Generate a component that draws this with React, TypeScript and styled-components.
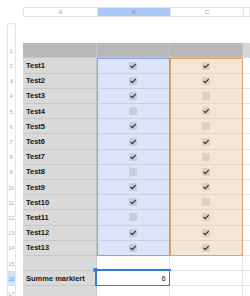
import React from 'react';
import styled, { createGlobalStyle } from 'styled-components';

// One sheet row: label in column A, checkbox states in B and C
interface Entry {
  name: string;
  b: boolean;
  c: boolean;
}

type Tone = 'head' | 'headEdge' | 'label' | 'blue' | 'orange' | 'blank';

const ROW_H = 15.2;

const entries: Entry[] = [
  { name: 'Test1', b: true, c: true },
  { name: 'Test2', b: true, c: true },
  { name: 'Test3', b: true, c: false },
  { name: 'Test4', b: false, c: true },
  { name: 'Test5', b: true, c: false },
  { name: 'Test6', b: true, c: true },
  { name: 'Test7', b: true, c: false },
  { name: 'Test8', b: false, c: true },
  { name: 'Test9', b: true, c: true },
  { name: 'Test10', b: true, c: false },
  { name: 'Test11', b: false, c: true },
  { name: 'Test12', b: true, c: true },
  { name: 'Test13', b: true, c: true },
];

const tones: Record<Tone, { bg: string; line: string }> = {
  head: { bg: '#b8b8b8', line: '#c6c6c6' },
  headEdge: { bg: '#d6d6d6', line: '#d6d6d6' },
  label: { bg: '#d9d9d9', line: '#c7c7c7' },
  blue: { bg: '#dbe4f8', line: '#c6d0ea' },
  orange: { bg: '#f5e5d7', line: '#e4d5c8' },
  blank: { bg: '#ffffff', line: '#e5e5e5' },
};

const GlobalStyle = createGlobalStyle`
  html, body {
    margin: 0;
    background: #ffffff;
    font-family: "Liberation Sans", Arial, sans-serif;
  }
  * {
    box-sizing: border-box;
  }
`;

const Page = styled.div`
  width: 250px;
  height: 296px;
  overflow: hidden;
  padding-top: 7px;
`;

const ColumnBar = styled.div`
  display: flex;
  height: 10.3px;
  margin-left: 22.7px;
  border: 1px solid #e2e2e2;
  border-right: none;
  border-radius: 3px 0 0 3px;
  overflow: hidden;
`;

const ColLetter = styled.div<{ $w?: number; $active?: boolean }>`
  flex: ${(p) => (p.$w ? `0 0 ${p.$w}px` : '1')};
  display: flex;
  align-items: center;
  justify-content: center;
  font-size: 6px;
  color: ${(p) => (p.$active ? '#7f95b8' : '#a3a3a3')};
  background: ${(p) => (p.$active ? '#abc9f6' : '#ffffff')};
  border-right: 1px solid #e6e6e6;
`;

const Main = styled.div`
  display: flex;
  margin-top: 5.7px;
  padding-left: 6.7px;
`;

const RowRuler = styled.div`
  flex: 0 0 9.3px;
  display: flex;
  flex-direction: column;
  padding-top: 19.3px;
  border: 1px solid #e6e6e6;
  border-bottom: none;
  border-radius: 3px 3px 0 0;
`;

const RowNum = styled.div<{ $active?: boolean }>`
  height: ${ROW_H}px;
  display: flex;
  align-items: center;
  justify-content: center;
  font-size: 5.5px;
  color: ${(p) => (p.$active ? '#5d8fd8' : '#a8a8a8')};
  background: ${(p) => (p.$active ? '#d2e2f9' : 'transparent')};
`;

const Sheet = styled.div`
  flex: 1;
  display: grid;
  grid-template-columns: 74px 73.3px 73.3px 1fr;
  grid-auto-rows: ${ROW_H}px;
  margin-top: 20.3px;
  margin-left: 6.7px;
`;

const Cell = styled.div<{ $tone: Tone; $row: number; $col: number; $align?: 'left' | 'center' | 'right' }>`
  grid-row: ${(p) => p.$row};
  grid-column: ${(p) => p.$col};
  position: relative;
  display: flex;
  align-items: center;
  justify-content: ${(p) =>
    p.$align === 'center' ? 'center' : p.$align === 'right' ? 'flex-end' : 'flex-start'};
  padding: 0 3.3px;
  background: ${(p) => tones[p.$tone].bg};
  border-bottom: 1px solid ${(p) => tones[p.$tone].line};
  border-right: 1px solid ${(p) => tones[p.$tone].line};
`;

const Label = styled.span`
  font-size: 7.5px;
  font-weight: 700;
  color: #151515;
  white-space: nowrap;
`;

const Value = styled.span`
  font-size: 7.5px;
  color: #222222;
`;

// Border round the data block of a column, drawn over its cells
const Band = styled.div<{ $col: number; $color: string }>`
  grid-column: ${(p) => p.$col};
  grid-row: 2 / 15;
  position: relative;
  z-index: 1;
  border: 1px solid ${(p) => p.$color};
  pointer-events: none;
`;

const Box = styled.span<{ $tone: 'blue' | 'orange' }>`
  width: 8px;
  height: 8px;
  display: inline-flex;
  border-radius: 1.5px;
  background: ${(p) => (p.$tone === 'blue' ? '#c6ccda' : '#ddd0c5')};
`;

const Selection = styled.div`
  position: absolute;
  inset: -2px;
  border: 2px solid #2f7be4;
  pointer-events: none;
`;

const Handle = styled.span<{ $corner: 'start' | 'end' }>`
  position: absolute;
  width: 4.4px;
  height: 4.4px;
  border-radius: 50%;
  background: #2f7be4;
  ${(p) => (p.$corner === 'start' ? 'top: -3.2px; left: -3.2px;' : 'bottom: -3.2px; right: -3.2px;')}
`;

const CheckBox: React.FC<{ checked: boolean; tone: 'blue' | 'orange' }> = ({ checked, tone }) => (
  <Box $tone={tone}>
    {checked && (
      <svg width="8" height="8" viewBox="0 0 8 8">
        <path
          d="M1.8 4.2 L3.3 5.7 L6.4 2.3"
          fill="none"
          stroke="#2a2a2a"
          strokeWidth="1.15"
          strokeLinecap="round"
          strokeLinejoin="round"
        />
      </svg>
    )}
  </Box>
);

const App: React.FC = () => {
  const both = entries.filter((e) => e.b && e.c).length;

  return (
    <>
      <GlobalStyle />
      <Page>
        <ColumnBar>
          <ColLetter $w={74}>A</ColLetter>
          <ColLetter $w={73.3} $active>
            B
          </ColLetter>
          <ColLetter $w={73.3}>C</ColLetter>
          <ColLetter />
        </ColumnBar>

        <Main>
          <RowRuler>
            {Array.from({ length: 17 }, (_, i) => (
              <RowNum key={i} $active={i + 1 === 16}>
                {i + 1}
              </RowNum>
            ))}
          </RowRuler>

          <Sheet>
            {/* Header row */}
            <Cell $row={1} $col={1} $tone="head" />
            <Cell $row={1} $col={2} $tone="head" />
            <Cell $row={1} $col={3} $tone="head" />
            <Cell $row={1} $col={4} $tone="headEdge" />

            {entries.map((e, i) => (
              <React.Fragment key={e.name}>
                <Cell $row={i + 2} $col={1} $tone="label">
                  <Label>{e.name}</Label>
                </Cell>
                <Cell $row={i + 2} $col={2} $tone="blue" $align="center">
                  <CheckBox checked={e.b} tone="blue" />
                </Cell>
                <Cell $row={i + 2} $col={3} $tone="orange" $align="center">
                  <CheckBox checked={e.c} tone="orange" />
                </Cell>
                <Cell $row={i + 2} $col={4} $tone="blank" />
              </React.Fragment>
            ))}

            <Cell $row={15} $col={1} $tone="label" />
            <Cell $row={15} $col={2} $tone="blank" />
            <Cell $row={15} $col={3} $tone="blank" />
            <Cell $row={15} $col={4} $tone="blank" />

            <Cell $row={16} $col={1} $tone="label">
              <Label>Summe markiert</Label>
            </Cell>
            <Cell $row={16} $col={2} $tone="blank" $align="right">
              <Value>{both}</Value>
              <Selection />
              <Handle $corner="start" />
              <Handle $corner="end" />
            </Cell>
            <Cell $row={16} $col={3} $tone="blank" />
            <Cell $row={16} $col={4} $tone="blank" />

            <Cell $row={17} $col={1} $tone="label" />
            <Cell $row={17} $col={2} $tone="blank" />
            <Cell $row={17} $col={3} $tone="blank" />
            <Cell $row={17} $col={4} $tone="blank" />

            <Band $col={2} $color="#85a3e4" />
            <Band $col={3} $color="#e39f66" />
          </Sheet>
        </Main>
      </Page>
    </>
  );
};

export default App;
